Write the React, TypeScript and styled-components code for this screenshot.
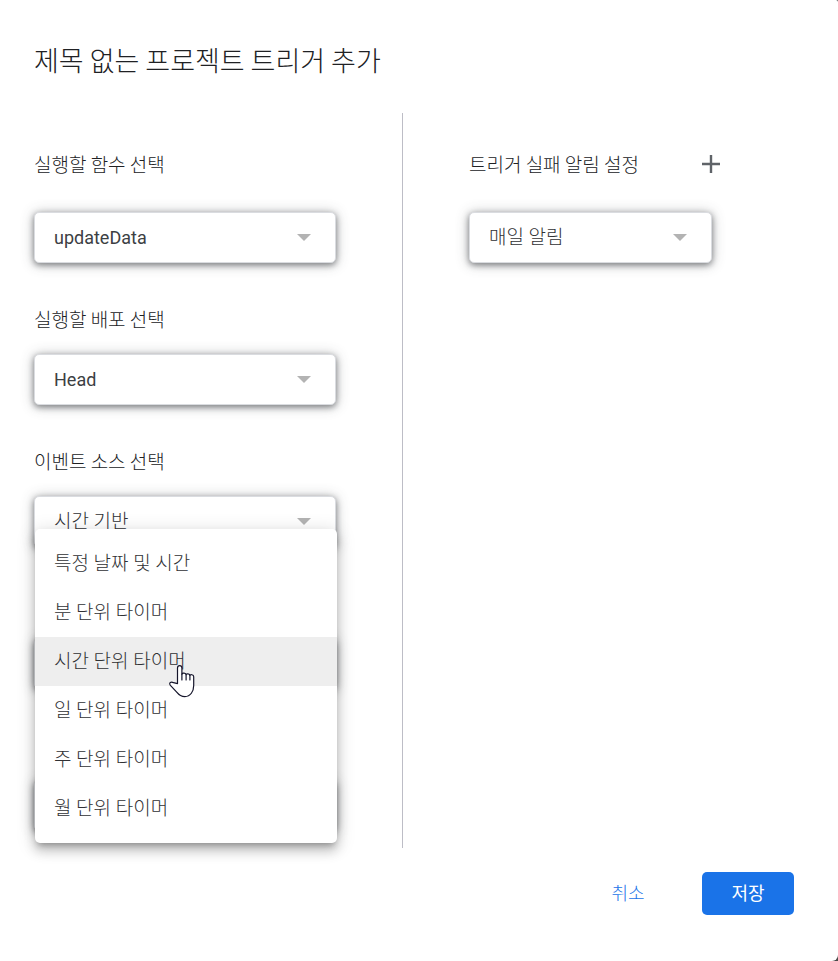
import React, { useId, useState } from "react";
import styled, { createGlobalStyle } from "styled-components";

const GlobalStyle = createGlobalStyle`
  *, *::before, *::after { box-sizing: border-box; }
  body {
    margin: 0;
    background: #4a4a4a;
    color: #202124;
    font-family: Roboto, "Noto Sans CJK KR", sans-serif;
  }
`;

const Dialog = styled.main`
  display: flex;
  flex-direction: column;
  min-height: 100vh;
  padding: 42px 44px 46px 34px;
  background: #fff;
  border-radius: 0 2px 6px 0;
`;

const Title = styled.h1`
  margin: 0 0 35px;
  font-family: "Noto Sans CJK KR", sans-serif;
  font-size: 27px;
  font-weight: 300;
  line-height: 36px;
`;

const Columns = styled.div`
  display: grid;
  grid-template-columns: 369fr 391fr;
`;

const TriggerColumn = styled.section`
  padding: 37px 66px 17px 0;
  border-right: 1px solid #bdbdc6;
`;

const AlertColumn = styled.section`
  padding: 37px 0 17px 66px;
`;

const Field = styled.div<{ $lead?: boolean }>`
  position: relative;
  display: flex;
  flex-direction: column;
  gap: ${(p) => (p.$lead ? 34 : 21)}px;

  & + & {
    margin-top: 42px;
  }
`;

const CoveredField = styled(Field)`
  padding-top: 49px;
`;

const LabelRow = styled.div`
  display: flex;
  align-items: center;
  justify-content: space-between;
  width: 100%;
  max-width: 255px;
  height: 28px;
`;

const Label = styled.label`
  font-family: "Noto Sans CJK KR", sans-serif;
  font-size: 19px;
  font-weight: 300;
  line-height: 28px;
  white-space: nowrap;
`;

const SelectBox = styled.div<{ $width: number }>`
  position: relative;
  display: flex;
  align-items: center;
  width: 100%;
  max-width: ${(p) => p.$width}px;
`;

const Select = styled.select<{ $latin?: boolean }>`
  appearance: none;
  width: 100%;
  height: 51px;
  padding: 0 48px 0 19px;
  border: 1px solid #dadce0;
  border-radius: 5px;
  background: #fff;
  box-shadow: 0 2px 6px rgba(60, 64, 67, 0.6), 0 1px 14px rgba(60, 64, 67, 0.3);
  color: ${(p) => (p.$latin ? "#3c4043" : "#303134")};
  font-family: Roboto, "Noto Sans CJK KR", sans-serif;
  font-size: ${(p) => (p.$latin ? 18 : 19)}px;
  font-weight: ${(p) => (p.$latin ? 400 : 300)};
`;

const Arrow = styled.svg`
  position: absolute;
  right: 25px;
  width: 14px;
  height: 7px;
  fill: #b3b3b3;
  pointer-events: none;
`;

const Menu = styled.ul`
  position: absolute;
  z-index: 2;
  top: -60px;
  left: 1px;
  width: 100%;
  max-width: 302px;
  margin: 0;
  padding: 10px 0;
  list-style: none;
  background: #fff;
  border-radius: 5px;
  box-shadow: 0 5px 6px -3px rgba(0, 0, 0, 0.28), 0 8px 11px 1px rgba(0, 0, 0, 0.15),
    0 3px 18px 2px rgba(0, 0, 0, 0.13);
`;

const MenuItem = styled.li<{ $active: boolean }>`
  position: relative;
  padding: 0 19px;
  background: ${(p) => (p.$active ? "#eeeeee" : "transparent")};
  color: #303134;
  font-family: Roboto, "Noto Sans CJK KR", sans-serif;
  font-size: 19px;
  font-weight: 300;
  line-height: 49px;
  cursor: pointer;
`;

const Pointer = styled.svg`
  position: absolute;
  z-index: 3;
  top: 28px;
  left: 134px;
  width: 26px;
  height: 33px;
  pointer-events: none;
`;

const IconButton = styled.button`
  display: flex;
  padding: 4px;
  border: 0;
  background: transparent;
  color: #5f6368;
  cursor: pointer;
`;

const Actions = styled.footer`
  display: flex;
  justify-content: flex-end;
  gap: 28px;
  margin-top: 24px;
`;

const ActionButton = styled.button<{ $primary?: boolean }>`
  min-width: 92px;
  height: 43px;
  padding: 0 16px 3px;
  border: 0;
  border-radius: 5px;
  background: ${(p) => (p.$primary ? "#1a73e8" : "transparent")};
  color: ${(p) => (p.$primary ? "#fff" : "#1a73e8")};
  font-family: Roboto, "Noto Sans CJK KR", sans-serif;
  font-size: 18px;
  font-weight: ${(p) => (p.$primary ? 400 : 300)};
  cursor: pointer;
`;

type DropdownProps = {
  id?: string;
  value: string;
  width?: number;
  latin?: boolean;
  name?: string;
};

function Dropdown({ id, value, width = 302, latin, name }: DropdownProps) {
  return (
    <SelectBox $width={width}>
      <Select id={id} $latin={latin} aria-label={name} defaultValue={value}>
        <option value={value}>{value}</option>
      </Select>
      <Arrow viewBox="0 0 14 7" aria-hidden="true">
        <path d="M0 0h14L7 7z" />
      </Arrow>
    </SelectBox>
  );
}

function LabeledField({ label, lead, ...rest }: DropdownProps & { label: string; lead?: boolean }) {
  const id = useId();
  return (
    <Field $lead={lead}>
      <Label htmlFor={id}>{label}</Label>
      <Dropdown id={id} {...rest} />
    </Field>
  );
}

const timers = [
  "특정 날짜 및 시간",
  "분 단위 타이머",
  "시간 단위 타이머",
  "일 단위 타이머",
  "주 단위 타이머",
  "월 단위 타이머",
];

function TimerMenu() {
  const [active, setActive] = useState(2);
  return (
    <Menu role="listbox" aria-label="타이머">
      {timers.map((timer, index) => (
        <MenuItem
          key={timer}
          role="option"
          aria-selected={index === active}
          $active={index === active}
          onMouseEnter={() => setActive(index)}
        >
          {timer}
          {index === active && (
            <Pointer viewBox="0 0 26 33" aria-hidden="true">
              <path
                d="M8.5 18.7V3c0-3.2 4.4-3.2 4.4 0v6.2c0-1.6 4.2-1.4 4.2.5 0-1.4 3.8-1.1 3.8.7.2-1.2 3.8-1 3.8 1.3v8.7c0 6-3.3 11.2-8.8 11.2-3.6 0-6-1.7-8.2-4.5L1.4 20.4c-2-2.7.8-4.2 3.1-2.7z"
                fill="#fff"
                stroke="#15152b"
                strokeWidth="1.2"
                strokeLinejoin="round"
              />
              <path
                d="M12.9 9v6M17.1 9.5V15M20.9 10.3V15"
                fill="none"
                stroke="#15152b"
                strokeWidth="1.2"
                strokeLinecap="round"
              />
            </Pointer>
          )}
        </MenuItem>
      ))}
    </Menu>
  );
}

export default function App() {
  const alertId = useId();
  return (
    <>
      <GlobalStyle />
      <Dialog>
        <Title>제목 없는 프로젝트 트리거 추가</Title>
        <Columns>
          <TriggerColumn>
            <LabeledField lead label="실행할 함수 선택" value="updateData" latin />
            <LabeledField label="실행할 배포 선택" value="Head" latin />
            <LabeledField label="이벤트 소스 선택" value="시간 기반" />
            <CoveredField>
              <Dropdown name="타이머" value="" />
              <TimerMenu />
            </CoveredField>
            <CoveredField>
              <Dropdown name="시간" value="" />
            </CoveredField>
          </TriggerColumn>
          <AlertColumn>
            <Field $lead>
              <LabelRow>
                <Label htmlFor={alertId}>트리거 실패 알림 설정</Label>
                <IconButton type="button" aria-label="추가">
                  <svg width="18" height="18" viewBox="0 0 18 18" aria-hidden="true">
                    <path d="M9 0v18M0 9h18" stroke="currentColor" strokeWidth="2.4" />
                  </svg>
                </IconButton>
              </LabelRow>
              <Dropdown id={alertId} value="매일 알림" width={243} />
            </Field>
          </AlertColumn>
        </Columns>
        <Actions>
          <ActionButton type="button">취소</ActionButton>
          <ActionButton type="button" $primary>
            저장
          </ActionButton>
        </Actions>
      </Dialog>
    </>
  );
}
